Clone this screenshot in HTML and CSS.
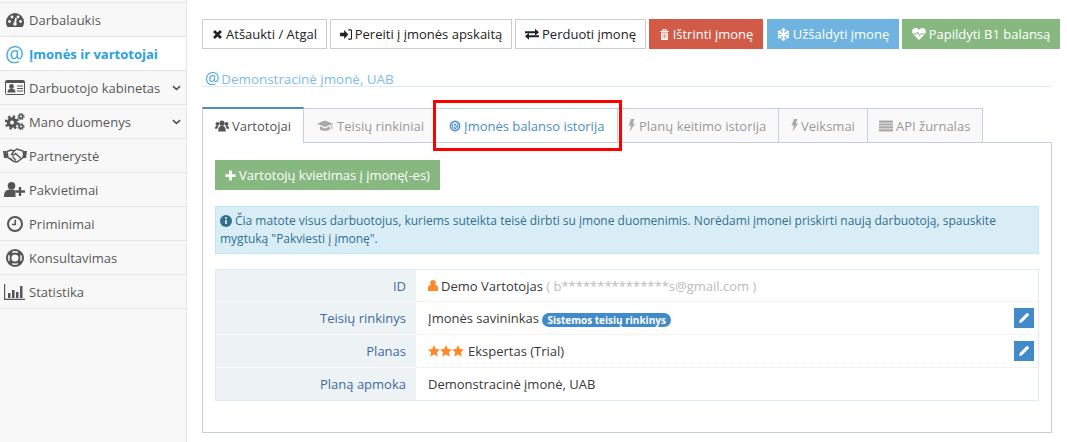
FILE: index.html
```html
<!DOCTYPE html>
<html lang="lt">
<head>
<meta charset="utf-8">
<title>Įmonės ir vartotojai</title>
<link rel="stylesheet" href="styles.css">
</head>
<body>
<div class="app">
  <nav class="sidebar">
    <a class="nav-item"><span class="glyph"><svg class="i-dash" viewBox="0 0 18 14"><path d="M9 0a9 9 0 0 0-9 9c0 2 .5 3.700 1.500 5h15c1-1.300 1.500-3 1.500-5a9 9 0 0 0-9-9z" fill="#555"/><circle cx="3.500" cy="8.500" r="1.400" fill="#f8f8f8"/><circle cx="6" cy="4" r="1.400" fill="#f8f8f8"/><circle cx="12" cy="4" r="1.400" fill="#f8f8f8"/><circle cx="14.500" cy="8.500" r="1.400" fill="#f8f8f8"/><path d="M9 11l1-6" stroke="#f8f8f8" stroke-width="1.800"/><circle cx="9" cy="11" r="1.800" fill="#f8f8f8"/></svg></span><span>Darbalaukis</span></a>
    <a class="nav-item nav-active"><span class="glyph nav-at">@</span><span>Įmonės ir vartotojai</span></a>
    <a class="nav-item"><span class="glyph"><svg class="i-card" viewBox="0 0 20 15"><rect x=".5" y=".5" width="19" height="14" rx="1" fill="none" stroke="#555"/><path d="M1 1h18v2H1z" fill="#555"/><circle cx="6.500" cy="6.500" r="2.400" fill="#555"/><path d="M2.500 12.500c0-3 1.500-3.800 4-3.800s4 .8 4 3.800z" fill="#555"/><path d="M12 6h6M12 8.500h6M12 11h6" stroke="#555" stroke-width="1.200"/></svg></span><span>Darbuotojo kabinetas</span><svg class="chev" viewBox="0 0 10 6"><path d="M1 1l4 3.500L9 1" fill="none" stroke="#555" stroke-width="1.800"/></svg></a>
    <a class="nav-item"><span class="glyph"><svg class="i-gear" viewBox="0 0 20 17"><circle cx="7" cy="9.500" r="3.600" fill="none" stroke="#555" stroke-width="3.200"/><circle cx="7" cy="9.500" r="5.900" fill="none" stroke="#555" stroke-width="2.600" stroke-dasharray="2.300 2.330"/><circle cx="16" cy="3.500" r="1.800" fill="none" stroke="#555" stroke-width="1.500"/><circle cx="16" cy="3.500" r="3" fill="none" stroke="#555" stroke-width="1.200" stroke-dasharray="1.300 1.060"/><circle cx="16" cy="13.500" r="1.800" fill="none" stroke="#555" stroke-width="1.500"/><circle cx="16" cy="13.500" r="3" fill="none" stroke="#555" stroke-width="1.200" stroke-dasharray="1.300 1.060"/></svg></span><span>Mano duomenys</span><svg class="chev" viewBox="0 0 10 6"><path d="M1 1l4 3.500L9 1" fill="none" stroke="#555" stroke-width="1.800"/></svg></a>
    <a class="nav-item"><span class="glyph"><svg class="i-hand" viewBox="0 0 24 15"><path d="M0 3h3l2 7H1zM24 3h-3l-2 7h4z" fill="#555"/><path d="M4 3.500l4-1.500 3 1 3-2 6 2 1 6-7 5-3-.5-6-4z" fill="none" stroke="#555" stroke-width="1.500"/><path d="M11 3L8.500 6.500c1.500 1 3 0 4-1l5.500 5" fill="none" stroke="#555" stroke-width="1.400"/><path d="M7 10l3 3M9.500 8.500l3.500 4" stroke="#555" stroke-width="1.200"/></svg></span><span>Partnerystė</span></a>
    <a class="nav-item"><span class="glyph"><svg class="i-plus" viewBox="0 0 21 15"><circle cx="7.500" cy="3.800" r="3.800" fill="#555"/><path d="M0 15c0-6 2-7.500 7.500-7.500 2 0 3 .5 4 1V15z" fill="#555"/><path d="M16 5v9M11.500 9.500H21" stroke="#555" stroke-width="2.400"/></svg></span><span>Pakvietimai</span></a>
    <a class="nav-item"><span class="glyph"><svg class="i-clock" viewBox="0 0 16 16"><circle cx="8" cy="8" r="7" fill="none" stroke="#555" stroke-width="2"/><path d="M8.300 3.800v4.700H5" fill="none" stroke="#555" stroke-width="1.600"/></svg></span><span>Priminimai</span></a>
    <a class="nav-item"><span class="glyph"><svg class="i-ring" viewBox="0 0 18 18"><circle cx="9" cy="9" r="8" fill="none" stroke="#555" stroke-width="2"/><circle cx="9" cy="9" r="4.500" fill="none" stroke="#555" stroke-width="2"/><path d="M3.300 3.300l2.500 2.500M14.700 3.300l-2.500 2.500M3.300 14.700l2.500-2.500M14.700 14.700l-2.500-2.500" stroke="#555" stroke-width="4"/></svg></span><span>Konsultavimas</span></a>
    <a class="nav-item"><span class="glyph"><svg class="i-stat" viewBox="0 0 21 16"><path d="M.6 0v15.400H21" fill="none" stroke="#555" stroke-width="1.200"/><path d="M4 9h2.500v5H4zM8 6h2.500v8H8zM12 8h2.500v6H12zM16 2h2.500v12H16z" fill="#555"/></svg></span><span>Statistika</span></a>
  </nav>

  <main class="main">
    <div class="actions">
      <a class="btn btn-default b-back"><svg class="ico" viewBox="0 0 12 12"><path d="M2.200 2.200l7.600 7.600M9.800 2.200l-7.600 7.600" stroke="#222" stroke-width="3"/></svg>Atšaukti / Atgal</a>
      <a class="btn btn-default b-go"><svg class="ico ico-go" viewBox="0 0 13 12"><path d="M0 4h4.500V1l4.500 5-4.500 5V8H0z" fill="#222"/><path d="M9 1h2.500a1 1 0 0 1 1 1v8a1 1 0 0 1-1 1H9" fill="none" stroke="#222" stroke-width="1.200"/></svg>Pereiti į įmonės apskaitą</a>
      <a class="btn btn-default b-pass"><svg class="ico ico-w" viewBox="0 0 14 12"><path d="M0 3h10V.5L14 4l-4 3.500V5H0zM14 7H4V4.500L0 8l4 3.500V9h10z" fill="#222" transform="translate(0 .3)"/></svg>Perduoti įmonę</a>
      <a class="btn btn-red"><svg class="ico" viewBox="0 0 12 13"><path d="M1 3h10M4 3V1h4v2" fill="none" stroke="#fff" stroke-width="1.200"/><path d="M2 4h8v8a1 1 0 0 1-1 1H3a1 1 0 0 1-1-1z" fill="#fff"/><path d="M4.300 5.500v5.500M6 5.500v5.500M7.700 5.500v5.500" stroke="#d25b47" stroke-width=".7"/></svg>Ištrinti įmonę</a>
      <a class="btn btn-blue"><svg class="ico ico-snow" viewBox="0 0 13 13"><path d="M6.500 0v13M.9 3.200l11.200 6.600M12.100 3.200L.9 9.800" stroke="#fff" stroke-width="1.700"/><path d="M4.500 1.300L6.500 3.300l2-2M4.500 11.700l2-2 2 2M1 5.900l2.700-.8-.7-2.700M12 5.900l-2.700-.8.7-2.700M1 7.100l2.700.8-.7 2.700M12 7.100l-2.700.8.7 2.700" fill="none" stroke="#fff" stroke-width="1.100"/></svg>Užšaldyti įmonę</a>
      <a class="btn btn-green b-top"><svg class="ico ico-w" viewBox="0 0 14 12"><path d="M7 12L1 6C-1 3.500.5 0 3.500 0 5 0 6.300.8 7 2c.7-1.200 2-2 3.500-2 3 0 4.500 3.500 2.500 6z" fill="#fff"/><path d="M1 6h3.500l1-2 2 3.500 1-1.500H13" fill="none" stroke="#87b87f" stroke-width="1"/></svg>Papildyti B1 balansą</a>
    </div>

    <h1 class="company"><span class="company-at">@</span>Demonstracinė įmonė, UAB</h1>

    <div class="tabs-wrap">
      <ul class="tabs">
        <li class="tab tab-active tab-a"><svg class="ico-w" viewBox="0 0 15 12"><circle cx="7.500" cy="3" r="2.800" fill="#555"/><circle cx="2.600" cy="3.600" r="2" fill="#555"/><circle cx="12.400" cy="3.600" r="2" fill="#555"/><path d="M3.500 12c0-4.500 1-6 4-6s4 1.500 4 6zM0 9c0-2 .5-3.500 2.500-3.500.5 0 1 .2 1.300.4C3 7 2.600 8 2.500 9zM15 9c0-2-.5-3.500-2.500-3.500-.5 0-1 .2-1.300.4.800 1.100 1.200 2.100 1.300 3.100z" fill="#555"/></svg>Vartotojai</li>
        <li class="tab tab-b"><svg class="i-cap" viewBox="0 0 16 12"><path d="M8 .5L0 3.800l8 3.300 8-3.300z" fill="#aaa"/><path d="M3 6.300v3.200c2.200 1.800 7.800 1.800 10 0V6.300L8 8.400z" fill="#aaa"/><path d="M14.800 4.500v4.500" stroke="#aaa"/></svg>Teisių rinkiniai</li>
        <li class="tab tab-c tab-blue-text"><svg class="i-reg" viewBox="0 0 12 12"><circle cx="6" cy="6" r="5.400" fill="#4a8fc7"/><circle cx="6" cy="6" r="3.600" fill="none" stroke="#fff" stroke-width=".8"/><path d="M4.700 8.500v-5h1.800a1.300 1.300 0 0 1 0 2.600H4.700M6.300 6l1.300 2.500" fill="none" stroke="#fff" stroke-width=".9"/></svg>Įmonės balanso istorija</li>
        <li class="tab tab-d"><svg class="bolt" viewBox="0 0 7 13"><path d="M3 0h3.500L4.800 4.500H7L1.500 13 3 6.500H.5z" fill="#aaa"/></svg>Planų keitimo istorija</li>
        <li class="tab tab-e"><svg class="bolt" viewBox="0 0 7 13"><path d="M3 0h3.500L4.800 4.500H7L1.500 13 3 6.500H.5z" fill="#aaa"/></svg>Veiksmai</li>
        <li class="tab tab-f"><svg class="ico-w" viewBox="0 0 14 11"><path d="M0 0h14v2.200H0zM0 2.900h14v2.200H0zM0 5.800h14V8H0zM0 8.700h14v2.200H0z" fill="#aaa"/></svg>API žurnalas</li>
      </ul>
      <div class="highlight"></div>
    </div>

    <section class="panel">
      <a class="btn btn-green btn-invite"><svg class="ico" viewBox="0 0 12 12"><path d="M6 .5v11M.5 6h11" stroke="#fff" stroke-width="3"/></svg>Vartotojų kvietimas į įmonę(-es)</a>
      <div class="alert"><svg class="ico-info" viewBox="0 0 12 12"><circle cx="6" cy="6" r="6" fill="#31708f"/><path d="M6 5v4M6 2.300v1.600" stroke="#d9edf7" stroke-width="1.800"/></svg>Čia matote visus darbuotojus, kuriems suteikta teisė dirbti su įmone duomenimis. Norėdami įmonei priskirti naują darbuotoją, spauskite mygtuką "Pakviesti į įmonę".</div>
      <div class="profile">
        <div class="row">
          <div class="label">ID</div>
          <div class="value"><svg class="ico-user" viewBox="0 0 10 11"><circle cx="5" cy="2.800" r="2.800" fill="#ff892a"/><path d="M0 11V8c0-1.800 1-3 2.500-3h5C9 5 10 6.200 10 8v3z" fill="#ff892a"/></svg>Demo Vartotojas <span class="muted">( b***************s@gmail.com )</span></div>
        </div>
        <div class="row">
          <div class="label">Teisių rinkinys</div>
          <div class="value">Įmonės savininkas <span class="badge">Sistemos teisių rinkinys</span><a class="edit"><svg viewBox="0 0 12 12"><path d="M1 11l.8-3L8.500 1.300a1 1 0 0 1 1.400 0l.8.800a1 1 0 0 1 0 1.400L4 10.200z" fill="#fff"/></svg></a></div>
        </div>
        <div class="row">
          <div class="label">Planas</div>
          <div class="value"><svg class="stars" viewBox="0 0 36 12"><path d="M6 0l1.800 4 4.200.5-3.100 2.800.9 4.300L6 9.400 2.200 11.600l.9-4.300L0 4.500 4.200 4z" fill="#ff892a"/><path d="M18 0l1.800 4 4.200.5-3.100 2.800.9 4.300L18 9.400l-3.800 2.200.9-4.300L12 4.500l4.200-.5z" fill="#ff892a"/><path d="M30 0l1.800 4 4.200.5-3.100 2.800.9 4.300L30 9.400l-3.800 2.200.9-4.300L24 4.500l4.200-.5z" fill="#ff892a"/></svg>Ekspertas (Trial)<a class="edit"><svg viewBox="0 0 12 12"><path d="M1 11l.8-3L8.500 1.300a1 1 0 0 1 1.400 0l.8.800a1 1 0 0 1 0 1.400L4 10.200z" fill="#fff"/></svg></a></div>
        </div>
        <div class="row">
          <div class="label">Planą apmoka</div>
          <div class="value">Demonstracinė įmonė, UAB</div>
        </div>
      </div>
    </section>
  </main>
</div>
</body>
</html>
```

FILE: styles.css
```css
* { box-sizing: border-box; }
html, body { margin: 0; height: 100%; }
body {
  background: #fff;
  color: #393939;
  font-family: "Open Sans", sans-serif;
  font-size: 13px;
  overflow: hidden;
}
.app { display: flex; height: 442px; }

.sidebar {
  width: 187px;
  flex: none;
  padding-top: 2px;
  background: #f8f8f8;
  border-right: 1px solid #e5e5e5;
}
.nav-item {
  height: 34px;
  display: flex;
  align-items: center;
  border-top: 1px solid #e5e5e5;
  color: #585858;
}
.nav-item:nth-child(9) { height: 35px; border-bottom: 1px solid #e5e5e5; }
.nav-active { background: #fff; color: #2b9fe0; font-weight: 700; }
.glyph {
  width: 29px;
  flex: none;
  display: flex;
  align-items: center;
  justify-content: center;
}
.i-dash { width: 18px; height: 14px; }
.i-card { width: 20px; height: 15px; }
.i-gear { width: 20px; height: 17px; }
.i-hand { width: 24px; height: 15px; }
.i-plus { width: 21px; height: 15px; }
.i-clock { width: 16px; height: 16px; }
.i-ring { width: 18px; height: 18px; }
.i-stat { width: 21px; height: 16px; }
.nav-at {
  font-size: 21px;
  line-height: 24px;
  font-weight: 400;
  color: #4aa9df;
}
.chev { margin-left: auto; margin-right: 5px; width: 9px; height: 6px; }

.main { flex: 1; padding: 19px 7px 0 15px; min-width: 0; }
.actions { display: flex; gap: 3px; height: 30px; }
.btn {
  height: 30px;
  display: inline-flex;
  align-items: center;
  justify-content: center;
  white-space: nowrap;
  color: #fff;
  font-size: 13px;
}
.btn-default { background: #fff; border: 1px solid #ccc; color: #222; }
.b-back { width: 125px; }
.b-go { width: 182px; }
.b-pass { width: 131px; }
.btn-red { background: #d15b47; width: 114px; }
.btn-blue { background: #6fb3e0; width: 132px; margin-left: 1px; }
.btn-green { background: #87b87f; }
.b-top { width: 158px; }
.ico { width: 11px; height: 11px; margin-right: 3px; flex: none; }
.ico-w { width: 14px; height: 12px; margin-right: 3px; flex: none; }
.ico-go { width: 12px; height: 11px; margin-right: 3px; }
.ico-snow { width: 13px; height: 13px; margin-right: 3px; }

.company {
  margin: 21px 0 0;
  padding-left: 3px;
  width: 850px;
  height: 17px;
  border-bottom: 1px solid #dcebf7;
  font-size: 13.400px;
  font-weight: 400;
  line-height: 17px;
  color: #7dbde8;
  white-space: nowrap;
}
.company-at { color: #4aa9df; font-size: 16px; margin-right: 2px; }

.tabs-wrap { position: relative; margin-top: 21px; }
.tabs {
  display: flex;
  list-style: none;
  margin: 0;
  padding: 0;
  height: 35px;
}
.tab {
  height: 35px;
  display: flex;
  align-items: center;
  white-space: nowrap;
  background: #f9f9f9;
  color: #999;
  border: 1px solid #c5d0dc;
  border-left: 0;
}
.tab-a {
  width: 102px;
  height: 36px;
  margin-top: -1px;
  padding-left: 12px;
  background: #fff;
  color: #555;
  border-left: 1px solid #c5d0dc;
  border-top: 2px solid #4c8fbd;
  border-bottom: 0;
  position: relative;
  z-index: 1;
}
.tab-b { width: 130px; padding-left: 13px; }
.tab-c { width: 184px; padding-left: 15px; background: #fff; }
.tab-d { width: 161px; padding-left: 10px; }
.tab-e { width: 89px; padding-left: 12px; }
.tab-f { width: 115px; padding-left: 11px; }
.tab-blue-text { color: #4c8fbd; }
.i-cap { width: 16px; height: 12px; margin-right: 4px; flex: none; }
.i-reg { width: 12px; height: 12px; margin-right: 3px; flex: none; }
.bolt { width: 7px; height: 13px; margin-right: 3px; flex: none; }
.tab-d .bolt { margin-right: 4px; }
.highlight {
  position: absolute;
  left: 231px;
  top: -8px;
  width: 189px;
  height: 51px;
  border: 3px solid #f00;
}

.panel {
  width: 850px;
  height: 291px;
  margin-top: -1px;
  border: 1px solid #c5d0dc;
  padding: 17px 12px 0;
}
.btn-invite { width: 225px; }
.alert {
  margin-top: 16px;
  height: 48px;
  padding: 5px 8px 0 4px;
  background: #d9edf7;
  border: 1px solid #bce8f1;
  color: #31708f;
  font-size: 12px;
  line-height: 18px;
}
.ico-info { width: 12px; height: 12px; margin: 0 3px 0 0; vertical-align: -1.500px; }

.profile {
  margin-top: 15px;
  border: 1px solid #dfebf4;
  height: 132px;
}
.row { display: flex; height: 33px; }
.row:first-child, .row:last-child { height: 32px; }
.label {
  width: 200px;
  flex: none;
  background: #edf3f4;
  color: #3d6aa0;
  text-align: right;
  padding-right: 10px;
  line-height: 32px;
  border-bottom: 1px solid #f7fbfd;
}
.row:last-child .label { border-bottom: 0; }
.value {
  flex: 1;
  position: relative;
  padding-left: 12px;
  line-height: 32px;
  color: #393939;
  white-space: nowrap;
  border-bottom: 1px dotted #e8e8e8;
}
.row:last-child .value { border-bottom: 0; }
.muted { color: #bbb; }
.ico-user { width: 10px; height: 11px; margin-right: 3px; }
.badge {
  display: inline-block;
  height: 14px;
  padding: 0 5px;
  border-radius: 7px;
  background: #428bca;
  color: #fff;
  font-size: 10px;
  font-weight: 700;
  line-height: 14px;
  vertical-align: -1px;
}
.stars { width: 36px; height: 12px; margin-right: 4px; vertical-align: -1px; }
.edit {
  position: absolute;
  right: 4px;
  top: 6px;
  width: 20px;
  height: 20px;
  background: #428bca;
  display: flex;
  align-items: center;
  justify-content: center;
}
.edit svg { width: 12px; height: 12px; }
```
